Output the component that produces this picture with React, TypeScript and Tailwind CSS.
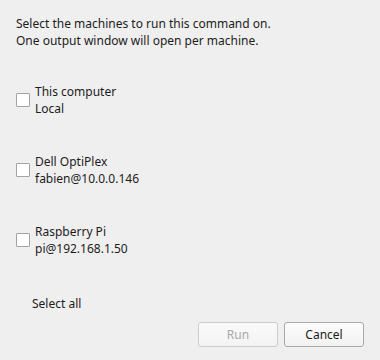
import React from "react";

const machines = [
  { name: "This computer", sub: "Local" },
  { name: "Dell OptiPlex", sub: "fabien@10.0.0.146" },
  { name: "Raspberry Pi", sub: "pi@192.168.1.50" },
];

export default function App() {
  return (
    <div
      className="w-[380px] h-[360px] bg-[#efefef] text-[#1c1c1c] text-[12px] leading-[17px] flex flex-col px-4 pt-[15px]"
      style={{ fontFamily: '"Noto Sans", "Open Sans", sans-serif' }}
    >
      <div>
        <div>Select the machines to run this command on.</div>
        <div>One output window will open per machine.</div>
      </div>
      <div className="flex flex-col gap-[36px] mt-[34px]">
        {machines.map((m) => (
          <label key={m.name} className="flex items-center gap-[5px]">
            <span className="w-[14px] h-[14px] bg-white border border-[#a3a3a3] rounded-[1px] shrink-0" />
            <span className="flex flex-col">
              <span>{m.name}</span>
              <span>{m.sub}</span>
            </span>
          </label>
        ))}
      </div>
      <div className="mt-[38px] ml-4">Select all</div>
      <div className="flex justify-end gap-[6px] mt-[10px]">
        <button
          disabled
          className="w-[80px] h-[25px] rounded-[3px] border border-[#cdcdcd] bg-gradient-to-b from-[#fafafa] to-[#f3f3f3] text-[#a8a8a8]"
        >
          Run
        </button>
        <button className="w-[80px] h-[25px] rounded-[3px] border border-[#a9a9a9] bg-gradient-to-b from-[#fcfcfc] to-[#f2f2f2] text-[#1c1c1c]">
          Cancel
        </button>
      </div>
    </div>
  );
}
